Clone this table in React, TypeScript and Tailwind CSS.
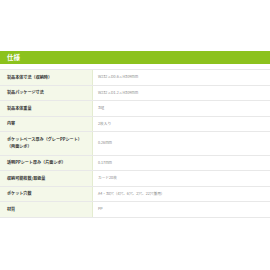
const specs: { label: string[]; value: string }[] = [
  { label: ['製品本体寸法（収納時）'], value: 'W232×D0.6×H309mm' },
  { label: ['製品パッケージ寸法'], value: 'W232×D1.2×H309mm' },
  { label: ['製品本体重量'], value: '38g' },
  { label: ['内容'], value: '2枚入り' },
  { label: ['ポケットベース厚み（グレーPPシート）', '（両面シボ）'], value: '0.26mm' },
  { label: ['透明PPシート厚み（片面シボ）'], value: '0.17mm' },
  { label: ['収納可能枚数/取扱量'], value: 'カード20枚' },
  { label: ['ポケット穴数'], value: 'A4・30穴（4穴、6穴、2穴、22穴兼用）' },
  { label: ['材質'], value: 'PP' },
]

export default function App() {
  return (
    <div
      className="w-[270px] h-[270px] bg-white overflow-hidden pt-[51px]"
      style={{ fontFamily: '"Noto Sans CJK JP", "Noto Sans", sans-serif' }}
    >
      {/* section heading */}
      <div className="h-[13px] bg-[#8cc21d] flex items-center pl-[7px]">
        <span className="text-[6.5px] font-bold text-white leading-none">仕様</span>
      </div>

      <div className="mt-[5px] border-t border-[#e8e8e8]">
        {specs.map((row, i) => (
          <div
            key={i}
            className={`grid grid-cols-[93px_1fr] border-b border-[#e8e8e8] ${
              row.label.length > 1 ? 'h-[23.5px]' : 'h-[15.5px]'
            }`}
          >
            <div className="bg-[#f4f8e9] flex flex-col justify-center pl-[7px] border-r border-[#e4ecd0]">
              {row.label.map((line, j) => (
                <span key={j} className="text-[4.1px] font-bold text-[#333] leading-[7px] whitespace-nowrap">
                  {line}
                </span>
              ))}
            </div>
            <div className="flex items-center pl-[5px]">
              <span className="text-[3.7px] text-[#888] leading-none whitespace-nowrap">{row.value}</span>
            </div>
          </div>
        ))}
      </div>
    </div>
  )
}
